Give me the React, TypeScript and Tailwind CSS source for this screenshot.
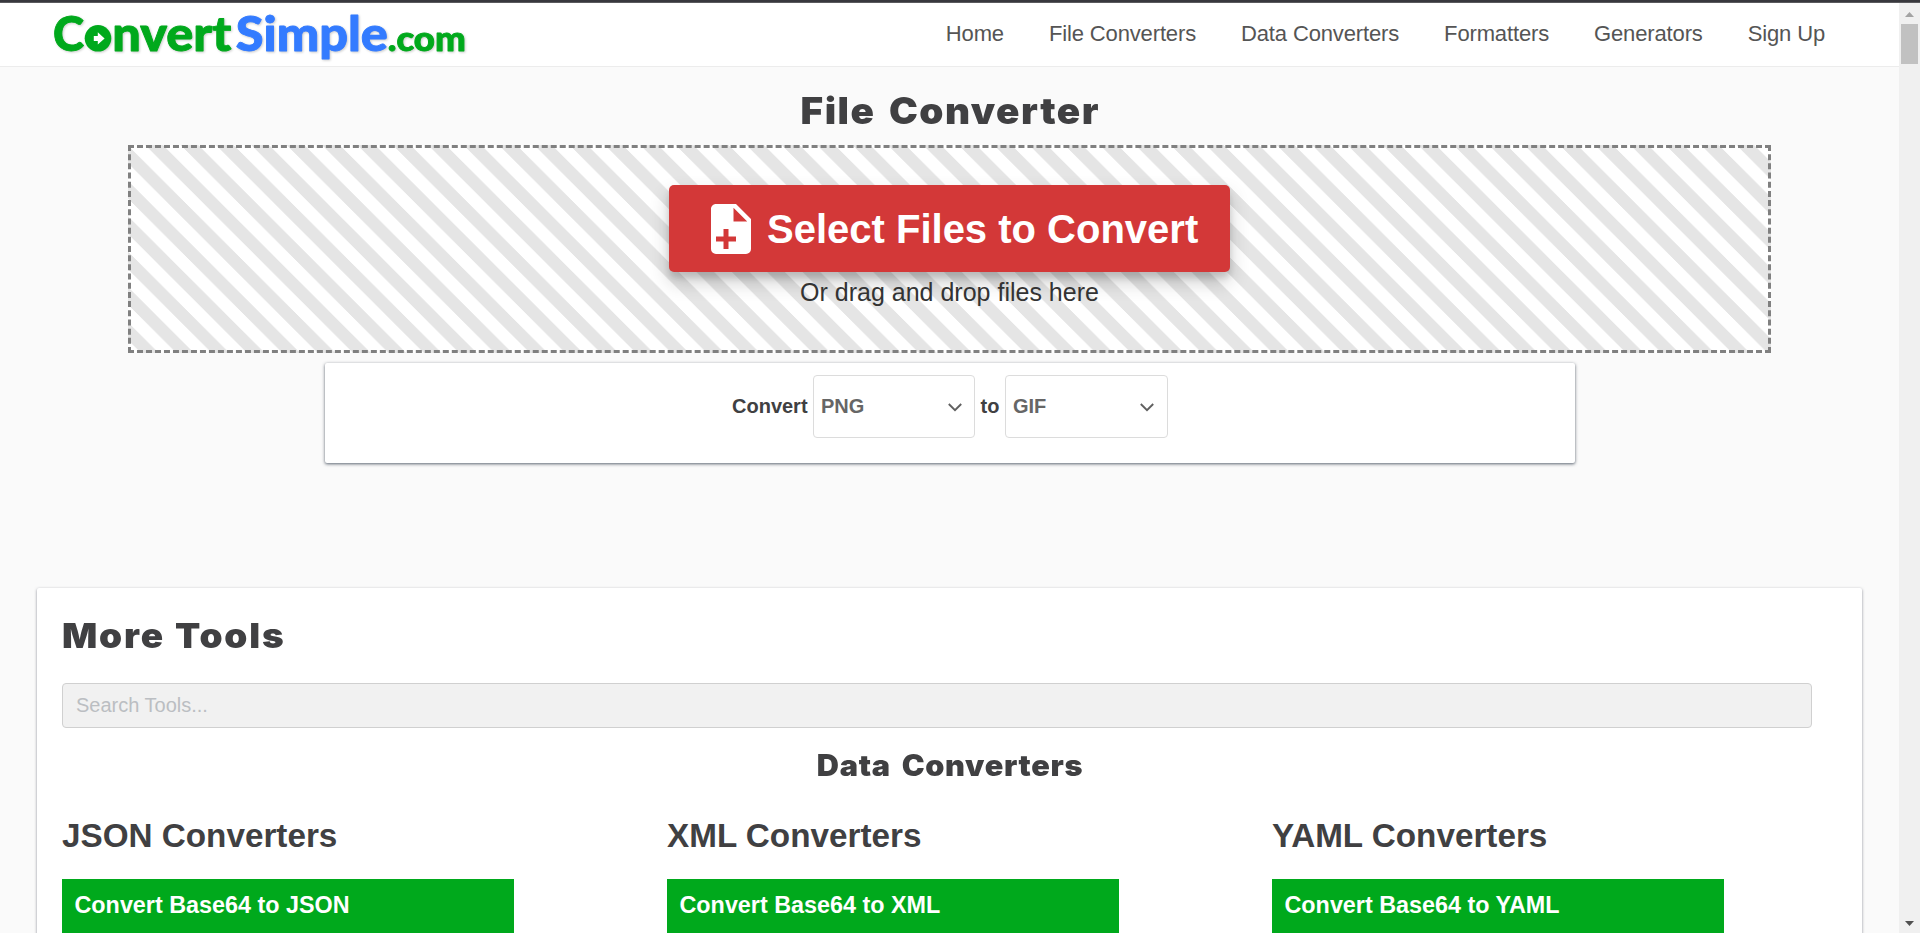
import React from "react";

const navItems = ["Home", "File Converters", "Data Converters", "Formatters", "Generators", "Sign Up"];

const columns = [
  { title: "JSON Converters", tool: "Convert Base64 to JSON" },
  { title: "XML Converters", tool: "Convert Base64 to XML" },
  { title: "YAML Converters", tool: "Convert Base64 to YAML" },
];

function Logo() {
  return (
    <svg
      className="h-[60px] w-[420px] overflow-visible font-['Lato',sans-serif] font-black [filter:drop-shadow(1px_1px_1px_rgba(0,0,0,0.2))]"
      viewBox="50 4 420 60"
      role="img"
      aria-label="ConvertSimple.com"
    >
      <g fill="#00a91c" stroke="#00a91c" strokeWidth="0.9" strokeLinejoin="round">
        <text x="53" y="49.6" fontSize="47" textLength="31" lengthAdjust="spacingAndGlyphs">C</text>
        <circle cx="98" cy="37.3" r="13.3" stroke="none" />
        <path d="M93.8 35h4v-3.8l6.8 6.2-6.8 6.2V40h-4z" fill="#fff" stroke="none" />
        <text x="112.3" y="49.6" fontSize="47" textLength="119" lengthAdjust="spacingAndGlyphs">nvert</text>
        <text x="387.8" y="49.6" fontSize="34" textLength="78" lengthAdjust="spacingAndGlyphs">.com</text>
      </g>
      <text
        x="235.8"
        y="49.6"
        fontSize="47"
        fill="#337bff"
        stroke="#337bff"
        strokeWidth="0.9"
        strokeLinejoin="round"
        textLength="152"
        lengthAdjust="spacingAndGlyphs"
      >
        Simple
      </text>
    </svg>
  );
}

function FilePlus() {
  return (
    <svg className="size-[60px] shrink-0" viewBox="0 0 24 24" fill="currentColor">
      <path d="M13 9h5.5L13 3.5V9M6 2h8l6 6v12a2 2 0 0 1-2 2H6a2 2 0 0 1-2-2V4c0-1.11.89-2 2-2m5 13v-3H9v3H6v2h3v3h2v-3h3v-2h-3z" />
    </svg>
  );
}

function FormatSelect({ value, className }: { value: string; className: string }) {
  return (
    <div className={`flex h-[63px] items-center justify-between rounded-[4px] border border-[#dcdcdc] bg-white pl-[7px] text-[#666] ${className}`}>
      <span className="pb-[2px]">{value}</span>
      <svg className="mt-[2px] h-[9px] w-[14px]" viewBox="0 0 14 9" fill="none" stroke="#606060" strokeWidth="1.9">
        <path d="M.8 1 7 7.2 13.2 1" />
      </svg>
    </div>
  );
}

function Scrollbar() {
  return (
    <div className="flex w-[21px] shrink-0 flex-col items-center justify-between bg-[#f0f0f0] pt-[9px] pb-[7px]">
      <div className="flex flex-col items-center">
        <svg className="h-[5px] w-[9px]" viewBox="0 0 9 5"><path d="M0 5 4.5 0 9 5z" fill="#a3a3a3" /></svg>
        <div className="mt-[7px] h-10 w-[17px] bg-[#c1c1c1]" />
      </div>
      <svg className="h-[5px] w-[9px]" viewBox="0 0 9 5"><path d="M0 0h9L4.5 5z" fill="#505050" /></svg>
    </div>
  );
}

export default function App() {
  return (
    <div className="flex h-screen flex-col overflow-hidden bg-[#fafafa] font-['Liberation_Sans',Arial,sans-serif] text-[#404042]">
      <div className="h-[3px] shrink-0 border-b border-[#5a5a5e] bg-[#38383d]" />
      <div className="flex min-h-0 flex-1">
        <div className="min-w-0 flex-1 overflow-hidden">
          <header className="flex h-16 items-center justify-between border-b border-[#ececec] bg-white pr-[74px] pl-[50px]">
            <Logo />
            <nav className="flex gap-[45px] pb-px text-[22px] leading-7 tracking-[-0.14px] text-[#555]">
              {navItems.map((item) => (
                <a key={item}>{item}</a>
              ))}
            </nav>
          </header>

          <main className="flex flex-col items-center">
            <h1 className="mt-[22px] h-14 scale-x-[1.06] pl-[2px] font-['Inter',sans-serif] text-[36.5px] leading-[44px] font-black tracking-[1.4px] [word-spacing:4px]">
              File Converter
            </h1>

            <section className="flex h-[208px] w-[1643px] flex-col items-center border-[3px] border-dashed border-[#808080] bg-[linear-gradient(45deg,#fff_25%,#e5e5e5_25%,#e5e5e5_50%,#fff_50%,#fff_75%,#e5e5e5_75%)] bg-[length:35.36px_35.36px] pt-[37px]">
              <button className="flex h-[87px] w-[561px] items-center rounded-[5px] bg-[#d33838] pl-8 text-[40px] font-bold text-white shadow-[0_10px_20px_rgba(0,0,0,0.19),0_6px_6px_rgba(0,0,0,0.13)]">
                <FilePlus />
                <span className="ml-[6px] whitespace-nowrap">Select Files to Convert</span>
              </button>
              <p className="mt-[5px] text-[25px] leading-[30px] text-[#333]">Or drag and drop files here</p>
            </section>

            <section className="mt-[10px] ml-px flex h-[100px] w-[1250px] justify-center rounded-[2px] bg-white pt-3 text-[20px] font-bold shadow-[0_1px_3px_#6b7480,0_1px_4px_rgba(60,64,67,0.2)]">
              <div className="flex h-[63px] items-center">
                <span className="w-[81px] pb-[2px]">Convert</span>
                <FormatSelect value="PNG" className="w-[162px] pr-3" />
                <span className="w-[30px] pb-[2px] text-center">to</span>
                <FormatSelect value="GIF" className="w-[163px] pr-[13px]" />
              </div>
            </section>

            <section className="mt-[125px] h-[400px] w-[1825px] shrink-0 rounded-[2px] bg-white px-[25px] pt-[26px] shadow-[0_1px_3px_rgba(60,64,80,0.6)]">
              <h2 className="origin-left scale-x-[1.07] font-['Inter',sans-serif] text-[34.5px] leading-[44px] font-black tracking-[1.7px] [word-spacing:1px]">
                More Tools
              </h2>
              <input
                placeholder="Search Tools..."
                className="mt-[25px] block h-[45px] w-[1750px] rounded-[4px] border border-[#d0d0d0] bg-[#f1f1f1] px-[13px] text-[20px] placeholder:text-[#bbbec2]"
              />
              <h2 className="mt-[18px] scale-x-[1.04] pl-px text-center font-['Inter',sans-serif] text-[29.5px] leading-[38px] font-black tracking-[0.65px] [word-spacing:4px]">
                Data Converters
              </h2>
              <div className="mt-[33px] grid grid-cols-[452px_452px_452px] gap-x-[153px]">
                {columns.map((column) => (
                  <div key={column.title}>
                    <h3 className="text-[33.25px] leading-[38px] font-bold">{column.title}</h3>
                    <a className="mt-[24px] block h-[70px] bg-[#00a91c] px-[12.5px] pt-3 text-[23.35px] leading-[28px] font-bold text-white">
                      {column.tool}
                    </a>
                  </div>
                ))}
              </div>
            </section>
          </main>
        </div>
        <Scrollbar />
      </div>
    </div>
  );
}
